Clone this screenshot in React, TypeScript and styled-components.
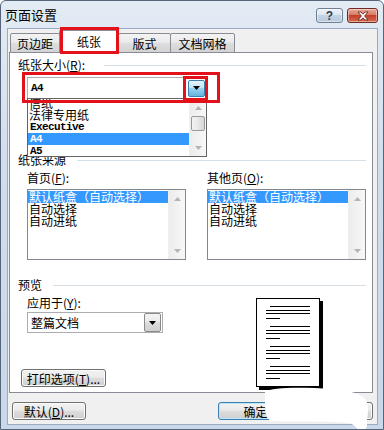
import styled, { createGlobalStyle } from "styled-components";

const GlobalStyle = createGlobalStyle`
  html, body { margin: 0; padding: 0; background: #fff; }
  body {
    font-family: "Noto Sans CJK SC", "Liberation Sans", sans-serif;
    font-size: 12px;
    color: #000;
  }
  * { box-sizing: border-box; }
`;

const mono = `"Liberation Mono", "DejaVu Sans Mono", monospace`;
const red = "#e3121a";

const Window = styled.div`
  position: relative;
  width: 384px;
  height: 430px;
  display: flex;
  flex-direction: column;
  border: 1px solid #56657a;
  border-radius: 6px 6px 0 0;
  background: linear-gradient(#e3ebf4, #d0dded 40%, #c9d8ea);
  padding: 0 5px 4px 6px;
  overflow: hidden;
`;

const TitleBar = styled.div`
  height: 27px;
  display: flex;
  align-items: center;
  gap: 4px;
`;

const Title = styled.div`
  flex: 1;
  margin-left: -2px;
  font-size: 13px;
  line-height: 27px;
  color: #000;
`;

const CaptionButton = styled.div<{ $w: number; $close?: boolean }>`
  width: ${(p) => p.$w}px;
  height: 15px;
  margin-top: 2px;
  border: 1px solid ${(p) => (p.$close ? "#6d2a20" : "#6f7f94")};
  border-radius: 3px;
  display: flex;
  align-items: center;
  justify-content: center;
  background: ${(p) =>
    p.$close
      ? "linear-gradient(#e9a99a, #d97b65 45%, #c4402b 50%, #d5694f)"
      : "linear-gradient(#eef3f8, #dce6f0 45%, #c5d4e4 50%, #b8cadd)"};
  box-shadow: inset 0 0 0 1px rgba(255, 255, 255, 0.45);
`;

const HelpGlyph = styled.span`
  font-family: "Liberation Sans", sans-serif;
  font-weight: bold;
  font-size: 12px;
  line-height: 12px;
  color: #2f3c4e;
`;

const Client = styled.div`
  flex: 1;
  display: flex;
  flex-direction: column;
  background: #f0f0f0;
  border: 1px solid #98abc3;
  padding: 0 4px 0 1px;
`;

const TabStrip = styled.div`
  position: relative;
  z-index: 1;
  height: 24px;
  display: flex;
  align-items: flex-end;
  padding-left: 2px;
`;

const Tab = styled.div<{ $w: number; $active?: boolean }>`
  position: relative;
  width: ${(p) => p.$w}px;
  height: ${(p) => (p.$active ? 23 : 20)}px;
  margin-left: -1px;
  display: flex;
  align-items: center;
  justify-content: center;
  padding-bottom: ${(p) => (p.$active ? 2 : 0)}px;
  font-size: 12px;
  border: 1px solid #898c95;
  border-bottom: ${(p) => (p.$active ? "none" : "1px solid #898c95")};
  border-radius: 2px 2px 0 0;
  background: ${(p) =>
    p.$active ? "#fff" : "linear-gradient(#f3f3f3, #ebebeb 45%, #dedede 50%, #d3d3d3)"};
  z-index: ${(p) => (p.$active ? 2 : 1)};
`;

const Highlight = styled.div<{ $l: number; $t: number; $w: number; $h: number }>`
  position: absolute;
  left: ${(p) => p.$l}px;
  top: ${(p) => p.$t}px;
  width: ${(p) => p.$w}px;
  height: ${(p) => p.$h}px;
  border: 3px solid ${red};
  pointer-events: none;
  z-index: 5;
`;

const Panel = styled.div`
  position: relative;
  margin-top: -1px;
  height: 341px;
  display: flex;
  flex-direction: column;
  background: #fff;
  border: 1px solid #898c95;
  padding: 6px 6px 0 8px;
`;

const SectionHeader = styled.div<{ $gap?: number; $top?: number }>`
  display: flex;
  align-items: center;
  gap: ${(p) => p.$gap ?? 11}px;
  height: 12px;
  line-height: 12px;
  margin-top: ${(p) => p.$top ?? 0}px;
  &::after {
    content: "";
    flex: 1;
    height: 1px;
    background: #d5dfe5;
  }
`;

const Label = styled.div`
  height: 12px;
  line-height: 12px;
  white-space: nowrap;
`;

const Indent = styled.div<{ $top: number }>`
  margin-left: 9px;
  margin-top: ${(p) => p.$top}px;
`;

const ComboWrap = styled.div<{ $w: number; $h: number }>`
  position: relative;
  width: ${(p) => p.$w}px;
  height: ${(p) => p.$h}px;
  display: flex;
  align-items: center;
  border: 1px solid #abadb3;
  background: #fff;
  padding: 0 1px 0 3px;
`;

const ComboText = styled.div<{ $mono?: boolean }>`
  flex: 1;
  font-family: ${(p) => (p.$mono ? mono : "inherit")};
  font-weight: ${(p) => (p.$mono ? "bold" : "normal")};
  font-size: ${(p) => (p.$mono ? 11 : 12)}px;
  letter-spacing: ${(p) => (p.$mono ? "-0.6px" : "0")};
`;

const DropButton = styled.div<{ $hot?: boolean; $h: number }>`
  width: 17px;
  height: ${(p) => p.$h}px;
  display: flex;
  align-items: center;
  justify-content: center;
  border: 1px solid ${(p) => (p.$hot ? "#3c7fb1" : "#8a8a8a")};
  border-radius: 2px;
  background: ${(p) =>
    p.$hot
      ? "linear-gradient(#e5f4fc, #c4e5f6 45%, #98d1ef 50%, #68b3db)"
      : "linear-gradient(#f4f4f4, #ebebeb 45%, #dddddd 50%, #cfcfcf)"};
`;

const DropList = styled.div`
  position: absolute;
  left: -1px;
  top: 100%;
  width: 180px;
  height: 59px;
  border: 1px solid #646464;
  background: #fff;
  overflow: hidden;
  z-index: 4;
`;

const ListItems = styled.div<{ $offset: number }>`
  margin-top: ${(p) => p.$offset}px;
  margin-right: 17px;
`;

const Item = styled.div<{ $sel?: boolean; $mono?: boolean }>`
  height: 12px;
  line-height: 12px;
  padding-left: ${(p) => (p.$mono ? 2 : 1)}px;
  white-space: nowrap;
  font-family: ${(p) => (p.$mono ? mono : "inherit")};
  font-weight: ${(p) => (p.$mono ? "bold" : "normal")};
  font-size: ${(p) => (p.$mono ? 11 : 12)}px;
  letter-spacing: ${(p) => (p.$mono ? "-0.6px" : "0")};
  background: ${(p) => (p.$sel ? "#3399ff" : "transparent")};
  color: ${(p) => (p.$sel ? "#fff" : "#000")};
`;

const ScrollBar = styled.div`
  position: absolute;
  right: 0;
  top: 0;
  bottom: 0;
  width: 17px;
  display: flex;
  flex-direction: column;
  background: linear-gradient(90deg, #ececec, #f8f8f8);
  border-left: 1px solid #f0f0f0;
`;

const ScrollArrow = styled.div`
  height: 17px;
  display: flex;
  align-items: center;
  justify-content: center;
`;

const Thumb = styled.div<{ $top: number }>`
  height: 15px;
  margin: ${(p) => p.$top}px 1px 0 1px;
  border: 1px solid #9a9a9a;
  border-radius: 2px;
  background: linear-gradient(90deg, #f3f3f3, #e8e8e8 50%, #d6d6d6);
`;

const Spacer = styled.div`
  flex: 1;
`;

const Columns = styled.div`
  display: flex;
  gap: 21px;
  margin-left: 9px;
  margin-top: 6px;
`;

const Column = styled.div`
  width: 159px;
  display: flex;
  flex-direction: column;
  gap: 5px;
`;

const ListBox = styled.div`
  position: relative;
  height: 71px;
  border: 1px solid #828790;
  background: #fff;
  padding-top: 1px;
`;

const PreviewRow = styled.div`
  display: flex;
  margin-top: 6px;
`;

const PreviewLeft = styled.div`
  display: flex;
  flex-direction: column;
  margin-left: 9px;
`;

const PushButton = styled.div<{ $w: number; $default?: boolean }>`
  width: ${(p) => p.$w}px;
  height: 18px;
  display: flex;
  align-items: center;
  justify-content: center;
  white-space: nowrap;
  font-size: 12px;
  border: 1px solid ${(p) => (p.$default ? "#3c7fb1" : "#707070")};
  border-radius: 3px;
  background: linear-gradient(#f2f2f2, #ebebeb 45%, #dddddd 50%, #cfcfcf);
  box-shadow: inset 0 0 0 1px ${(p) => (p.$default ? "#bfe6f8" : "#fbfbfb")};
`;

const PrintButton = styled(PushButton)`
  margin-top: 36px;
  margin-left: -6px;
`;

const Page = styled.div`
  width: 64px;
  height: 89px;
  margin: 1px 46px 0 auto;
  border: 1px solid #000;
  background: #fff;
  box-shadow: 3px 3px 0 #000;
`;

const Footer = styled.div`
  display: flex;
  justify-content: space-between;
  padding: 9px 0 0 3px;
`;

const FooterRight = styled.div`
  display: flex;
  gap: 6px;
`;

const Smudge = styled.svg`
  position: absolute;
  left: 261px;
  top: 383px;
  z-index: 10;
`;

const Down = () => (
  <svg width="7" height="4" viewBox="0 0 7 4">
    <path d="M0 0h7L3.5 4z" fill="#000" />
  </svg>
);

const ArrowGlyph = ({ up }: { up?: boolean }) => (
  <svg width="7" height="4" viewBox="0 0 7 4">
    <path d={up ? "M0 4h7L3.5 0z" : "M0 0h7L3.5 4z"} fill="#b4b4b4" />
  </svg>
);

const PageLines = () => (
  <svg width="62" height="87" viewBox="0 0 62 87">
    {[7, 27, 47, 67].map((y) => (
      <g key={y} stroke="#000" strokeWidth="1">
        <line x1="13" y1={y + 0.5} x2="53" y2={y + 0.5} />
        <line x1="9" y1={y + 4.5} x2="53" y2={y + 4.5} />
        <line x1="9" y1={y + 7.5} x2="53" y2={y + 7.5} />
        <line x1="9" y1={y + 12.5} x2="23" y2={y + 12.5} />
      </g>
    ))}
  </svg>
);

const SourceList = () => (
  <ListBox>
    <ListItems $offset={0}>
      <Item $sel>默认纸盒（自动选择）</Item>
      <Item>自动选择</Item>
      <Item>自动进纸</Item>
    </ListItems>
    <ScrollBar>
      <ScrollArrow>
        <ArrowGlyph up />
      </ScrollArrow>
      <Spacer />
      <ScrollArrow>
        <ArrowGlyph />
      </ScrollArrow>
    </ScrollBar>
  </ListBox>
);

export default function App() {
  return (
    <>
      <GlobalStyle />
      <Window>
        <TitleBar>
          <Title>页面设置</Title>
          <CaptionButton $w={27}>
            <HelpGlyph>?</HelpGlyph>
          </CaptionButton>
          <CaptionButton $w={31} $close>
            <svg width="12" height="10" viewBox="0 0 12 10">
              <path
                d="M1 1h3l2 2.2L8 1h3L7.6 5 11 9H8L6 6.8 4 9H1l3.4-4z"
                fill="#fff"
                stroke="#5a1a12"
                strokeWidth="0.8"
              />
            </svg>
          </CaptionButton>
        </TitleBar>
        <Client>
          <TabStrip>
            <Tab $w={50}>页边距</Tab>
            <Tab $w={60} $active>
              纸张
              <Highlight $l={0} $t={-4} $w={59} $h={27} />
            </Tab>
            <Tab $w={53}>版式</Tab>
            <Tab $w={65}>文档网格</Tab>
          </TabStrip>
          <Panel>
            <SectionHeader $gap={19}>
              <span>
                纸张大小(<u>R</u>):
              </span>
            </SectionHeader>
            <Indent $top={6}>
              <ComboWrap $w={180} $h={22}>
                <ComboText $mono>A4</ComboText>
                <DropButton $hot $h={17}>
                  <Down />
                </DropButton>
                <Highlight $l={-6} $t={-6} $w={198} $h={31} />
                <Highlight $l={155} $t={-2} $w={25} $h={25} />
                <DropList>
                  <ListItems $offset={-2}>
                    <Item>信纸</Item>
                    <Item>法律专用纸</Item>
                    <Item $mono>Executive</Item>
                    <Item $mono $sel>
                      A4
                    </Item>
                    <Item $mono>A5</Item>
                  </ListItems>
                  <ScrollBar>
                    <ScrollArrow>
                      <ArrowGlyph up />
                    </ScrollArrow>
                    <Thumb $top={0} />
                    <Spacer />
                    <ScrollArrow>
                      <ArrowGlyph />
                    </ScrollArrow>
                  </ScrollBar>
                </DropList>
              </ComboWrap>
            </Indent>
            <SectionHeader $top={55}>
              <span>纸张来源</span>
            </SectionHeader>
            <Columns>
              <Column>
                <Label>
                  首页(<u>F</u>):
                </Label>
                <SourceList />
              </Column>
              <Column>
                <Label>
                  其他页(<u>O</u>):
                </Label>
                <SourceList />
              </Column>
            </Columns>
            <SectionHeader $top={19}>
              <span>预览</span>
            </SectionHeader>
            <PreviewRow>
              <PreviewLeft>
                <Label>
                  应用于(<u>Y</u>):
                </Label>
                <Indent $top={3} style={{ marginLeft: 0 }}>
                  <ComboWrap $w={136} $h={21}>
                    <ComboText>整篇文档</ComboText>
                    <DropButton $h={19}>
                      <Down />
                    </DropButton>
                  </ComboWrap>
                </Indent>
                <PrintButton $w={85}>
                  打印选项(<u>T</u>)...
                </PrintButton>
              </PreviewLeft>
              <Page>
                <PageLines />
              </Page>
            </PreviewRow>
          </Panel>
          <Footer>
            <PushButton $w={74}>
              默认(<u>D</u>)...
            </PushButton>
            <FooterRight>
              <PushButton $w={75} $default>
                确定
              </PushButton>
              <PushButton $w={74}>取消</PushButton>
            </FooterRight>
          </Footer>
        </Client>
        <Smudge width="112" height="48" viewBox="0 0 112 48">
          <path
            d="M3 8 C10 3 40 3 70 5 C90 7 100 10 104 16 C107 22 106 30 105 36 C105 40 106 45 101 47 C96 47 93 41 88 39 C70 37 40 38 10 37 C5 36 3 30 3 20 Z"
            fill="#fff"
          />
        </Smudge>
      </Window>
    </>
  );
}
